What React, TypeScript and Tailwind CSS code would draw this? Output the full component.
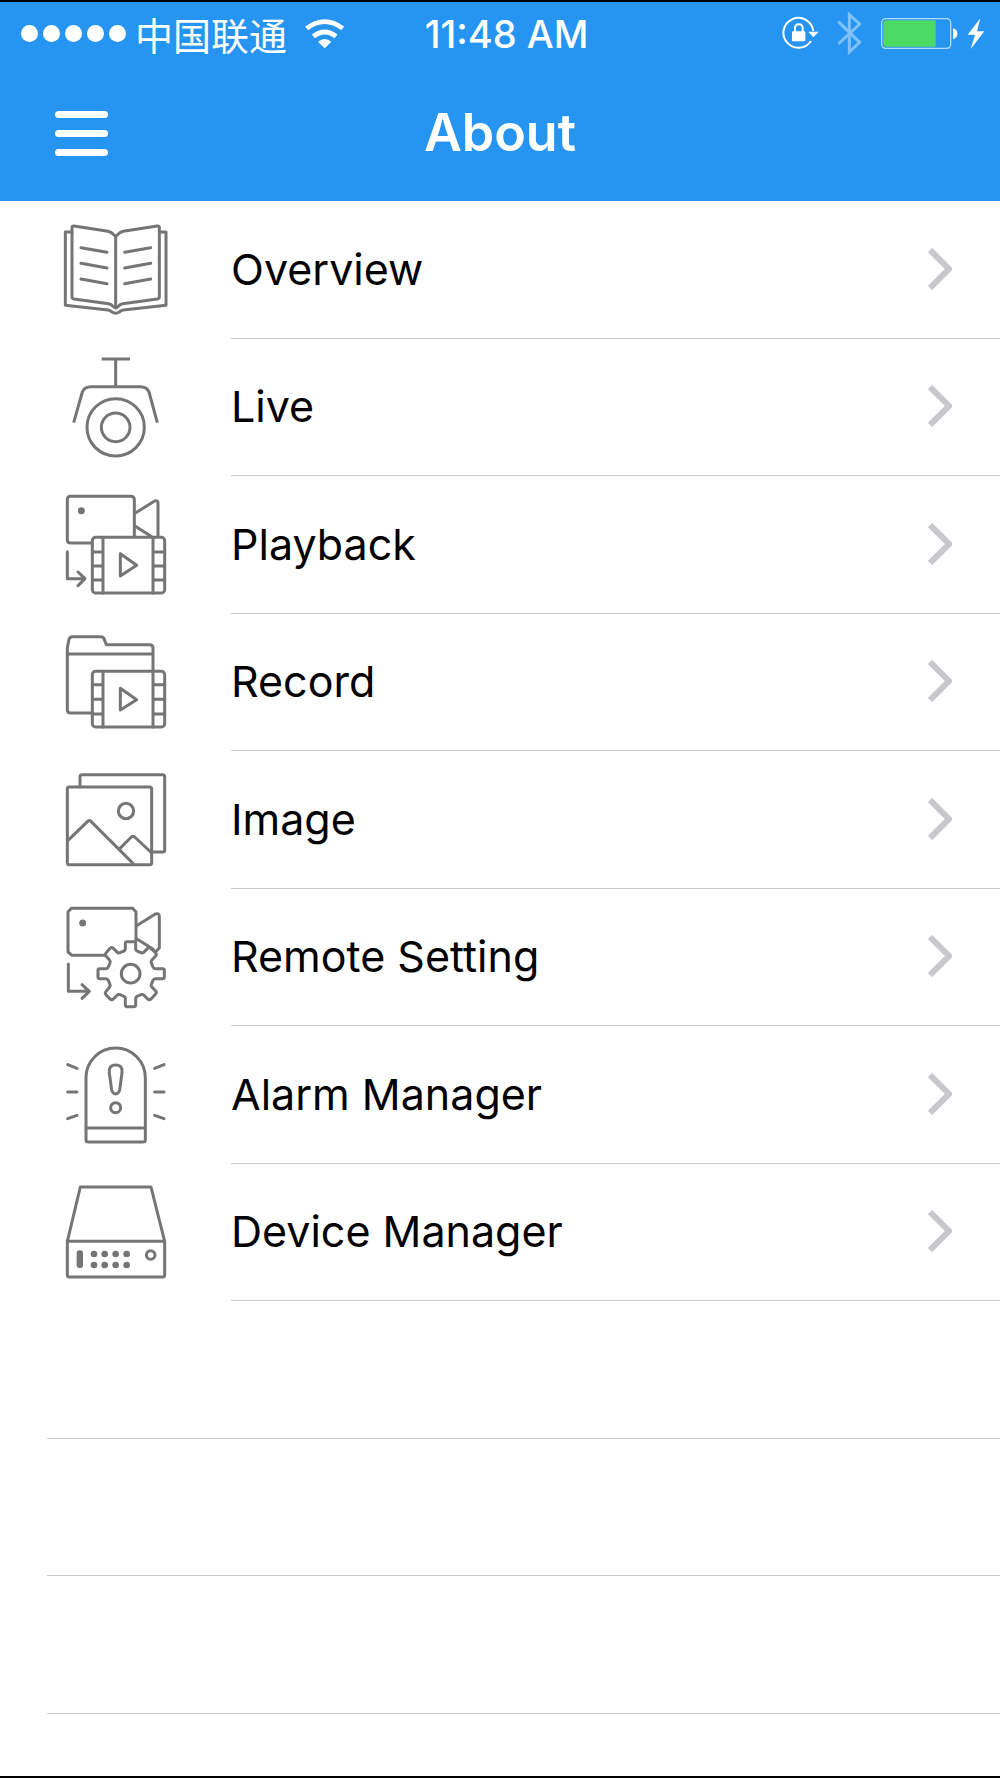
import type {ReactNode} from 'react'

interface IconProps {
  children: ReactNode
}

const MenuIcon = ({children}: IconProps) => (
  <svg
    viewBox="0 0 384 360"
    className="block w-32 h-[120px] text-[#757575]"
    fill="none"
    stroke="currentColor"
    strokeWidth="9"
    strokeLinecap="round"
    strokeLinejoin="round"
    aria-hidden="true"
  >
    {children}
  </svg>
)

const OverviewIcon = () => (
  <MenuIcon>
    <path d="M66 66H46V286L174 300Q180 301 186 306Q197 313 208 306Q214 301 220 300L348 286V66H328" />
    <path d="M66 52Q66 47 72 48L174 64Q184 66 190 73L197 79L204 73Q210 66 220 64L322 48Q328 47 328 52V261Q328 266 322 267L218 281Q210 282 205 289Q197 298 189 289Q184 282 176 281L72 267Q66 266 66 261Z" />
    <path d="M197 79V294M93 113L171 127M93 160L171 174M93 207L171 221M224 127L302 113M224 174L302 160M224 221L302 207" />
  </MenuIcon>
)

const LiveIcon = () => (
  <MenuIcon>
    <path
      strokeLinecap="butt"
      d="M155 33H240M197 33V116M71 224L97 132Q103 116 124 116H270Q291 116 297 132L322 224"
    />
    <circle cx="197" cy="238" r="86" />
    <circle cx="197" cy="238" r="43" />
  </MenuIcon>
)

const PlaybackIcon = () => (
  <MenuIcon>
    <path d="M126 174H62Q52 174 52 164V44Q52 34 62 34H242Q253 34 253 44V154" />
    <path d="M256 84L314 48Q324 45 324 54V154M256 124L303 154" />
    <circle cx="94" cy="77" r="6" fill="currentColor" />
    <path d="M52 200V281H104M84 261L105 281L84 302" />
    <rect x="127" y="157" width="217" height="167" rx="10" />
    <path d="M159 157V324M309 157V324M127 201H159M127 243H159M127 285H159M309 201H344M309 243H344M309 285H344" />
    <path d="M211 206V273L260 241Z" />
  </MenuIcon>
)

const RecordIcon = () => (
  <MenuIcon>
    <path d="M126 270H62Q52 270 52 260V75L57 49Q59 41 67 41H152Q160 41 162 47L169 65H299Q309 65 309 75V144M52 93H309" />
    <rect x="127" y="145" width="217" height="167" rx="10" />
    <path d="M159 145V312M309 145V312M127 185H159M127 229H159M127 273H159M309 185H344M309 229H344M309 273H344" />
    <path d="M211 196V261L260 230Z" />
  </MenuIcon>
)

const ImageIcon = () => (
  <MenuIcon>
    <path d="M90 80V50Q90 44 96 44H338Q344 44 344 50V270Q344 276 338 276H306" />
    <rect x="52" y="81" width="253" height="233" rx="6" />
    <path d="M54 241L113 184Q118 179 123 184L249 310M207 268L244 231Q249 227 254 231L302 276" />
    <circle cx="228" cy="153" r="23" />
  </MenuIcon>
)

const RemoteSettingIcon = () => (
  <MenuIcon>
    <path d="M166 172H66L54 162V42L64 31H248L258 42V128" />
    <path d="M262 82L316 48Q328 44 328 56V150L318 160M262 124L310 154" />
    <circle cx="98" cy="75" r="6" fill="currentColor" />
    <path d="M55 198V280H116M96 260L118 280L96 301" />
    <path d="M226 136Q226 131 231 131H252Q257 131 257 136V153Q257 157 261 159L273 164Q278 166 281 163L293 151Q298 146 303 151L317 165Q321 170 317 174L305 187Q302 190 304 195L309 207Q311 212 316 212H338Q343 212 343 217V237Q343 242 338 242H316Q311 242 309 247L304 259Q302 263 305 266L317 279Q321 284 317 288L303 303Q298 307 293 303L281 291Q278 288 273 290L261 295Q257 297 257 301V321Q257 326 252 326H231Q226 326 226 321V301Q226 297 222 295L210 290Q205 288 202 291L190 303Q185 307 180 303L168 290Q164 285 168 281L179 267Q182 263 180 259L175 247Q173 242 168 242H149Q144 242 144 237V217Q144 212 149 212H168Q173 212 175 207L180 195Q182 190 179 187L168 174Q164 169 168 165L180 151Q185 147 190 151L202 163Q205 166 210 164L222 159Q226 157 226 153Z" />
    <circle cx="242" cy="227" r="28" />
  </MenuIcon>
)

const AlarmIcon = () => (
  <MenuIcon>
    <path d="M108 314V128A89 89 0 0 1 286 128V314Q286 321 279 321H115Q108 321 108 314ZM108 279H286" />
    <path d="M197 90Q219 90 216 114L209 165Q206 177 197 177Q188 177 185 165L178 114Q175 90 197 90Z" />
    <circle cx="197" cy="218" r="15" />
    <path d="M53 89L81 100M53 171H81M53 251L81 241M342 89L314 100M342 171H314M342 251L314 241" />
  </MenuIcon>
)

const DeviceIcon = () => (
  <MenuIcon>
    <path d="M52 205L91 42H303L344 205V305Q344 312 337 312H59Q52 312 52 305ZM52 205H344" />
    <circle cx="302" cy="246" r="13" />
    <g fill="currentColor" stroke="none">
      <rect x="80" y="232" width="19" height="53" rx="8" />
      <circle cx="132" cy="243" r="10" />
      <circle cx="164" cy="243" r="10" />
      <circle cx="197" cy="243" r="10" />
      <circle cx="230" cy="243" r="10" />
      <circle cx="132" cy="276" r="10" />
      <circle cx="164" cy="276" r="10" />
      <circle cx="197" cy="276" r="10" />
      <circle cx="230" cy="276" r="10" />
    </g>
  </MenuIcon>
)

const menu = [
  {id: 'overview', label: 'Overview', icon: <OverviewIcon />},
  {id: 'live', label: 'Live', icon: <LiveIcon />},
  {id: 'playback', label: 'Playback', icon: <PlaybackIcon />},
  {id: 'record', label: 'Record', icon: <RecordIcon />},
  {id: 'image', label: 'Image', icon: <ImageIcon />},
  {id: 'remote-setting', label: 'Remote Setting', icon: <RemoteSettingIcon />},
  {id: 'alarm-manager', label: 'Alarm Manager', icon: <AlarmIcon />},
  {id: 'device-manager', label: 'Device Manager', icon: <DeviceIcon />},
]

const emptyRows = ['empty-1', 'empty-2', 'empty-3']

const StatusBar = () => (
  <div className="grid h-[63px] grid-cols-[1fr_auto_1fr] items-center pl-[21px] pr-2">
    <div className="flex items-center">
      <div className="flex gap-[5px]">
        {[1, 2, 3, 4, 5].map((dot) => (
          <span key={dot} className="size-[17px] rounded-full bg-white" />
        ))}
      </div>
      <span className="ml-[9px] whitespace-nowrap font-['Noto_Sans_CJK_SC',sans-serif] text-[38px] leading-[48px]">
        中国联通
      </span>
      <svg viewBox="918 51 120 90" className="ml-[18px] h-[30px] w-10" fill="none" aria-hidden="true">
        <path d="M923 79Q977 39 1031 79M943 103Q977 77 1011 103" stroke="white" strokeWidth="14" />
        <path d="M957 119Q977 103 997 119L977 139Z" fill="white" />
      </svg>
    </div>
    <span className="whitespace-nowrap text-[38px] font-medium leading-[48px]">11:48 AM</span>
    <div className="flex items-center justify-end">
      <svg viewBox="66 45 111 111" className="size-[37px]" fill="none" aria-hidden="true">
        <path d="M153 123A45 45 0 1 1 160 93" stroke="white" strokeWidth="6" />
        <path d="M145 95H176L160 112Z" fill="white" />
        <path d="M105 97V85Q105 73 116 73Q128 73 128 85V97" stroke="white" strokeWidth="6" />
        <rect x="96" y="94" width="40" height="30" rx="3" fill="white" />
      </svg>
      <svg viewBox="231 33 75 135" className="ml-[18px] h-[45px] w-[25px]" fill="none" aria-hidden="true">
        <path d="M235 65L299 127L268 156V44L299 72L235 132" stroke="#80c1f8" strokeWidth="9" />
      </svg>
      <svg viewBox="360 51 234 99" className="ml-[18px] h-[33px] w-[78px]" fill="none" aria-hidden="true">
        <rect x="365" y="56" width="207" height="89" rx="12" stroke="#b4dafb" strokeWidth="4" />
        <path d="M527 61H379Q370 61 370 70V131Q370 140 379 140H527Z" fill="#4cd964" />
        <path d="M579 85Q592 89 592 101Q592 114 579 118Z" fill="white" />
      </svg>
      <svg viewBox="621 51 75 96" className="ml-[9px] h-8 w-[25px]" aria-hidden="true">
        <path d="M661 52L623 101H645L632 144L673 91H651Z" fill="white" />
      </svg>
    </div>
  </div>
)

const NavBar = () => (
  <div className="grid h-[136px] grid-cols-[1fr_auto_1fr] items-center px-[55px]">
    <button type="button" aria-label="Open menu" className="grid w-[53px] gap-3">
      <span className="h-[7px] rounded-full bg-white" />
      <span className="h-[7px] rounded-full bg-white" />
      <span className="h-[7px] rounded-full bg-white" />
    </button>
    <h1 className="text-[52px] font-semibold leading-[64px]">About</h1>
  </div>
)

const Chevron = () => (
  <svg viewBox="0 0 24 42" className="h-[42px] w-6" fill="none" aria-hidden="true">
    <path d="M2 2L21 21L2 40" stroke="#c7c7cc" strokeWidth="6" />
  </svg>
)

export default function App() {
  return (
    <div className="flex min-h-screen flex-col border-y-2 border-black bg-white font-[Inter,'Liberation_Sans',sans-serif] text-black">
      <header className="bg-[#2695f2] text-white">
        <StatusBar />
        <NavBar />
      </header>
      <main>
        <ul>
          {menu.map((item) => (
            <li key={item.id} className="odd:h-[138px] even:h-[137px]">
              <a href={`#${item.id}`} className="flex h-full">
                <div className="w-[231px] shrink-0 pl-[50px] pt-[9px]">{item.icon}</div>
                <div className="flex grow items-center justify-between border-b border-[#c8c7cc] pb-[2px] pr-12">
                  <span className="text-[43px] leading-[56px]">{item.label}</span>
                  <Chevron />
                </div>
              </a>
            </li>
          ))}
          {emptyRows.map((row) => (
            <li
              key={row}
              aria-hidden="true"
              className="ml-[47px] border-b border-[#c8c7cc] odd:h-[138px] even:h-[137px]"
            />
          ))}
        </ul>
      </main>
    </div>
  )
}
